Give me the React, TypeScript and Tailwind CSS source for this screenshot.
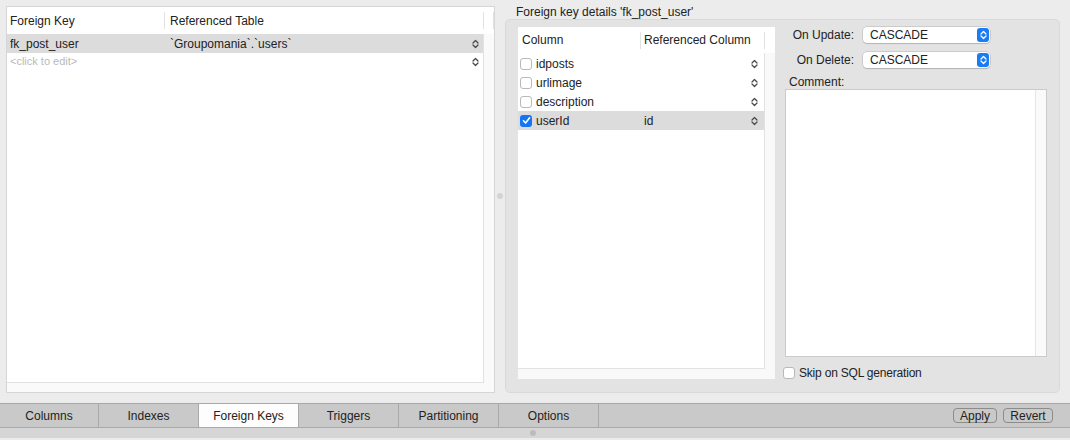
import React from 'react';

function Stepper({ color = '#4a4a4a' }: { color?: string }) {
  return (
    <svg width="7" height="10" viewBox="0 0 7 10" className="shrink-0">
      <path d="M1 4 L3.5 1.5 L6 4" fill="none" stroke={color} strokeWidth="1.3" strokeLinecap="round" strokeLinejoin="round" />
      <path d="M1 6 L3.5 8.5 L6 6" fill="none" stroke={color} strokeWidth="1.3" strokeLinecap="round" strokeLinejoin="round" />
    </svg>
  );
}

function Checkbox({ checked }: { checked?: boolean }) {
  if (checked) {
    return (
      <div className="w-[12px] h-[12px] rounded-[3px] bg-[#1475f5] flex items-center justify-center shrink-0">
        <svg width="9" height="9" viewBox="0 0 9 9">
          <path d="M1.5 4.8 L3.6 7 L7.6 1.8" fill="none" stroke="#fff" strokeWidth="1.6" strokeLinecap="round" strokeLinejoin="round" />
        </svg>
      </div>
    );
  }
  return <div className="w-[12px] h-[12px] rounded-[3px] bg-white border border-[#b9b9b9] shrink-0" />;
}

function Select({ value }: { value: string }) {
  return (
    <div className="w-[127px] h-[16px] rounded-[4px] bg-white shadow-[0_0_0_0.5px_rgba(0,0,0,0.2),0_1px_1px_rgba(0,0,0,0.12)] flex items-center pl-[7px] pr-[1px]">
      <span className="flex-1 text-[12px] text-[#222]">{value}</span>
      <div className="w-[12px] h-[14px] rounded-[3px] bg-[#1a7cf5] flex items-center justify-center">
        <Stepper color="#fff" />
      </div>
    </div>
  );
}

const columns = [
  { name: 'idposts', ref: '', checked: false },
  { name: 'urlimage', ref: '', checked: false },
  { name: 'description', ref: '', checked: false },
  { name: 'userId', ref: 'id', checked: true },
];

const tabs = ['Columns', 'Indexes', 'Foreign Keys', 'Triggers', 'Partitioning', 'Options'];

export default function App() {
  return (
    <div
      className="w-[1070px] h-[440px] bg-[#ececec] flex flex-col overflow-hidden text-[#222]"
      style={{ fontFamily: '"Liberation Sans", Arial, sans-serif' }}
    >
      <div className="h-[403px] flex">
        {/* Foreign key list */}
        <div className="ml-[6px] mt-[6px] w-[489px] h-[387px] border border-[#d6d6d6] bg-[#fafafa] flex flex-col">
          <div className="h-[27px] bg-white flex items-center text-[12px] shrink-0">
            <div className="w-[157px] pl-[3px]">Foreign Key</div>
            <div className="w-px h-[17px] bg-[#e2e2e2]" />
            <div className="w-[318px] pl-[5px]">Referenced Table</div>
            <div className="w-px h-[17px] bg-[#e2e2e2]" />
            <div className="flex-1" />
            <div className="w-px h-[17px] bg-[#e2e2e2]" />
          </div>
          <div className="flex-1 flex">
            <div className="w-[477px] bg-white border-r border-b border-[#e2e2e2] text-[12px]">
              <div className="h-[19px] bg-[#dcdcdc] flex items-center">
                <div className="w-[158px] pl-[3px]">fk_post_user</div>
                <div className="flex-1 pl-[5px]">`Groupomania`.`users`</div>
                <div className="pr-[4px]"><Stepper /></div>
              </div>
              <div className="h-[17px] flex items-center">
                <div className="flex-1 pl-[3px] text-[11px] text-[#b9b9b9]">&lt;click to edit&gt;</div>
                <div className="pr-[4px]"><Stepper /></div>
              </div>
            </div>
            <div className="flex-1" />
          </div>
          <div className="h-[9px]" />
        </div>

        {/* splitter */}
        <div className="w-[10px] flex items-center justify-center">
          <div className="w-[6px] h-[6px] rounded-full bg-[#d3d3d3] mb-[12px]" />
        </div>

        {/* details */}
        <div className="w-[555px] flex flex-col">
          <div className="h-[19px] pl-[11px] text-[12px] flex items-center pt-[5px]">
            Foreign key details 'fk_post_user'
          </div>
          <div className="h-[374px] rounded-[5px] bg-[#e3e3e3] border border-[#d9d9d9] flex pl-[12px] pt-[7px] pr-[12px] pb-[13px]">
            {/* column table */}
            <div className="w-[257px] bg-[#f9f9f9] flex flex-col">
              <div className="h-[26px] bg-white flex items-center text-[12px] shrink-0">
                <div className="w-[122px] pl-[4px]">Column</div>
                <div className="w-px h-[17px] bg-[#e2e2e2]" />
                <div className="w-[123px] pl-[3px]">Referenced Column</div>
                <div className="w-px h-[17px] bg-[#e2e2e2]" />
              </div>
              <div className="flex-1 flex">
                <div className="w-[247px] bg-white border-r border-b border-[#e2e2e2] text-[12px] pt-[1px]">
                  {columns.map((c) => (
                    <div key={c.name} className={`h-[19px] flex items-center ${c.checked ? 'bg-[#dcdcdc]' : ''}`}>
                      <div className="w-[122px] pl-[2px] flex items-center gap-[4px]">
                        <Checkbox checked={c.checked} />
                        <span>{c.name}</span>
                      </div>
                      <div className="flex-1 pl-[4px]">{c.ref}</div>
                      <div className="pr-[6px]"><Stepper /></div>
                    </div>
                  ))}
                </div>
                <div className="flex-1" />
              </div>
              <div className="h-[10px] shrink-0" />
            </div>

            {/* options */}
            <div className="flex-1 ml-[10px] flex flex-col">
              <div className="flex items-center h-[16px]">
                <div className="w-[69px] text-right text-[12px]">On Update:</div>
                <div className="ml-[9px]"><Select value="CASCADE" /></div>
              </div>
              <div className="flex items-center h-[16px] mt-[9px]">
                <div className="w-[69px] text-right text-[12px]">On Delete:</div>
                <div className="ml-[9px]"><Select value="CASCADE" /></div>
              </div>
              <div className="text-[12px] mt-[7px] pl-[4px] h-[15px] leading-[15px]">Comment:</div>
              <div className="mt-[-1px] w-[262px] h-[268px] bg-[#fafafa] border border-[#cbcbcb] flex">
                <div className="w-[250px] bg-white border-r border-[#e6e6e6]" />
              </div>
              <div className="flex items-center mt-[10px] ml-[-2px] gap-[4px] h-[12px]">
                <Checkbox />
                <span className="text-[12px] tracking-[-0.2px]">Skip on SQL generation</span>
              </div>
            </div>
          </div>
        </div>
      </div>

      {/* tab bar */}
      <div className="h-[25px] bg-[#c9c9c9] border-t border-b border-[#a9a9a9] flex items-stretch text-[12px] shrink-0">
        {tabs.map((t, i) => (
          <div
            key={t}
            className={`${i === 0 ? 'w-[99px]' : 'w-[100px]'} border-r border-[#a9a9a9] flex items-center justify-center ${t === 'Foreign Keys' ? 'bg-[#fdfdfd]' : ''}`}
          >
            {t}
          </div>
        ))}
        <div className="flex-1" />
        <div className="flex items-center gap-[6px] pr-[17px]">
          <div className="h-[15px] w-[44px] rounded-[4px] border border-[#8c8c8c] flex items-center justify-center">Apply</div>
          <div className="h-[15px] w-[50px] rounded-[4px] border border-[#8c8c8c] flex items-center justify-center">Revert</div>
        </div>
      </div>

      {/* bottom splitter */}
      <div className="h-[10px] bg-[#d6d6d6] flex items-center shrink-0">
        <div className="ml-[530px] w-[6px] h-[6px] rounded-full bg-[#bcbcbc]" />
      </div>
      <div className="flex-1 bg-[#ececec]" />
    </div>
  );
}
